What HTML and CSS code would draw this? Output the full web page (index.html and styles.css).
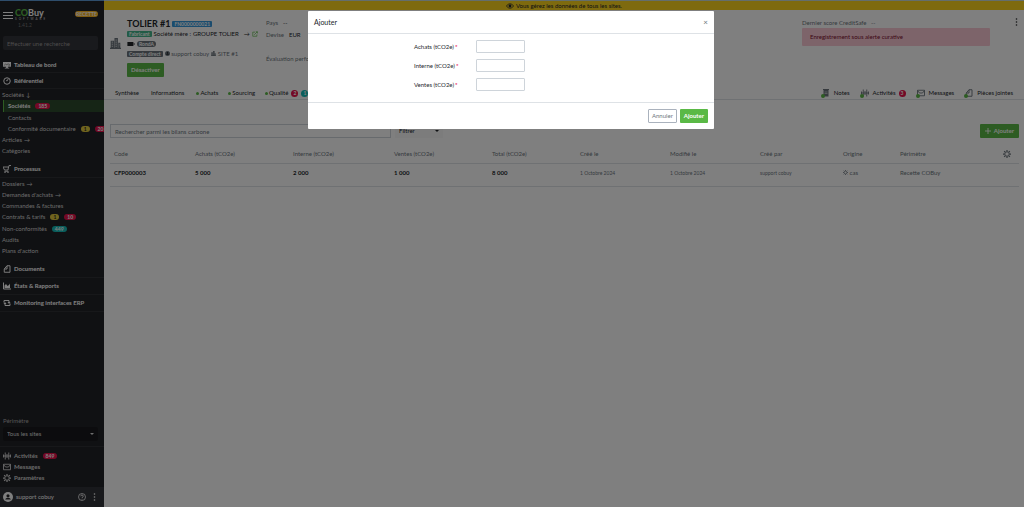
FILE: index.html
```html
<!DOCTYPE html>
<html lang="fr">
  <head>
    <meta charset="utf-8">
    <title>COBuy - TOLIER #1</title>
    <link rel="stylesheet" href="styles.css">
  </head>

  <body>
    <!-- Shared icons -->
    <svg class="sprite" aria-hidden="true">
      <symbol id="i-mail" viewBox="0 0 16 16"><path d="M1 2.5h14v11H1z M1 3l4 5h6l4-5" fill="none" stroke="currentColor" stroke-width="1.8"/></symbol>
      <symbol id="i-activity" viewBox="0 0 16 16"><path d="M1 5v6M4.500 1v14M8 4v8M11.500 1v14M15 5v6M0 8h16" fill="none" stroke="currentColor" stroke-width="1.800"/></symbol>
      <symbol id="i-gear" viewBox="0 0 16 16"><circle cx="8" cy="8" r="4.500" fill="none" stroke="currentColor" stroke-width="2"/><path d="M8 0v3M8 13v3M0 8h3M13 8h3M2.300 2.300l2 2M11.700 11.700l2 2M13.700 2.300l-2 2M4.300 11.700l-2 2" stroke="currentColor" stroke-width="2.500"/></symbol>
      <symbol id="i-doc" viewBox="0 0 16 16"><path d="M8 1.500h6v13H2.500V8L8 1.500V8H3" fill="none" stroke="currentColor" stroke-width="1.900"/></symbol>
      <symbol id="i-note" viewBox="0 0 16 16"><path d="M3 2h10v13H3z" fill="currentColor"/><path d="M5 6h6M5 9h6" stroke="#fff" stroke-width="1"/><path d="M2 1h12" stroke="currentColor" stroke-width="2"/></symbol>
      <symbol id="i-building" viewBox="0 0 16 16"><path d="M1 4h5v11H1zM6.500 0h5v15h-5zM12 7h3v8h-3zM0 14h16v2H0z" fill="currentColor"/><path d="M2.500 6h2M2.500 9h2M2.500 12h2M8 3h2M8 6h2M8 9h2M8 12h2M13 10h1" stroke="#fff" stroke-width="1"/></symbol>
      <symbol id="i-user" viewBox="0 0 16 16"><circle cx="8" cy="8" r="8" fill="currentColor"/><circle cx="8" cy="6" r="2.500" class="cut"/><path d="M3.500 12c1-4 8-4 9 0z" class="cut"/></symbol>
      <symbol id="i-dots" viewBox="0 0 4 16"><circle cx="2" cy="2" r="1.600" fill="currentColor"/><circle cx="2" cy="8" r="1.600" fill="currentColor"/><circle cx="2" cy="14" r="1.600" fill="currentColor"/></symbol>
    </svg>

    <div class="app">
      <aside class="sidebar">
        <div class="brand">
          <button class="burger" aria-label="Menu"><span></span><span></span><span></span></button>
          <a class="logo" href="#">
            <span class="logo-name"><b>CO</b>Buy</span>
            <span class="logo-sub">SOFTWARE</span>
            <span class="version">1.41.2</span>
          </a>
          <span class="env">RECETTE</span>
        </div>

        <input class="side-search" type="text" placeholder="Effectuer une recherche" aria-label="Effectuer une recherche">

        <nav class="nav">
          <a class="nav-head compact" href="#">
            <svg viewBox="0 0 18 16"><path d="M0 1h18v11H0zM7 12h4v2h3v2H4v-2h3z" fill="currentColor"/><path d="M2 9l4-3 3 2 3-4M12 7h4M12 10h4" fill="none" stroke="#333" stroke-width="1"/></svg>
            Tableau de bord
          </a>
          <a class="nav-head compact" href="#">
            <svg viewBox="0 0 16 16"><circle cx="8" cy="8" r="6.500" fill="none" stroke="currentColor" stroke-width="2"/><path d="M8 9l4-6-6 4z" fill="currentColor"/></svg>
            Référentiel
          </a>
          <ul>
            <li><a href="#">Sociétés <span class="arrow">↓</span></a></li>
            <li class="sub active"><a href="#">Sociétés <span class="badge red">185</span></a></li>
            <li class="sub"><a href="#">Contacts</a></li>
            <li class="sub"><a href="#">Conformité documentaire <span class="badge yellow">1</span><span class="badge red">20</span></a></li>
            <li><a href="#">Articles <span class="arrow">→</span></a></li>
            <li><a href="#">Catégories</a></li>
          </ul>
          <a class="nav-head spaced" href="#">
            <svg viewBox="0 0 16 16"><path d="M0 4h11l-1 6H3zM11 5l1-4h4M3 12.500h8" fill="none" stroke="currentColor" stroke-width="1.800"/><circle cx="4" cy="14.500" r="1.500" fill="currentColor"/><circle cx="10" cy="14.500" r="1.500" fill="currentColor"/></svg>
            Processus
          </a>
          <ul>
            <li><a href="#">Dossiers <span class="arrow">→</span></a></li>
            <li><a href="#">Demandes d'achats <span class="arrow">→</span></a></li>
            <li><a href="#">Commandes &amp; factures</a></li>
            <li class="tall"><a href="#">Contrats &amp; tarifs <span class="badge yellow">1</span><span class="badge red">10</span></a></li>
            <li><a href="#">Non-conformités <span class="badge teal">449</span></a></li>
            <li><a href="#">Audits</a></li>
            <li><a href="#">Plans d'action</a></li>
          </ul>
          <a class="nav-head spaced" href="#"><svg><use href="#i-doc"/></svg>Documents</a>
          <a class="nav-head" href="#">
            <svg viewBox="0 0 16 16"><path d="M1 1v13h15" fill="none" stroke="currentColor" stroke-width="2"/><path d="M3 12V7l3-3 3 4 3-2 2-3v9z" fill="currentColor"/></svg>
            États &amp; Rapports
          </a>
          <a class="nav-head" href="#">
            <svg viewBox="0 0 16 16"><path d="M2 7V3h10v4M14 9v4H4V9" fill="none" stroke="currentColor" stroke-width="2"/><path d="M9 6h6l-3 4zM1 10h6L4 6z" fill="currentColor"/></svg>
            Monitoring interfaces ERP
          </a>
        </nav>

        <div class="perimeter">
          <label for="site">Périmètre</label>
          <div class="select-wrap">
            <select id="site"><option>Tous les sites</option></select>
          </div>
        </div>

        <ul class="shortcuts">
          <li><a href="#"><svg><use href="#i-activity"/></svg>Activités <span class="badge red">849</span></a></li>
          <li><a href="#"><svg><use href="#i-mail"/></svg>Messages</a></li>
          <li><a href="#"><svg><use href="#i-gear"/></svg>Paramètres</a></li>
        </ul>

        <div class="account">
          <svg class="avatar"><use href="#i-user"/></svg>
          <span>support cobuy</span>
          <svg class="help" viewBox="0 0 16 16"><circle cx="8" cy="8" r="7" fill="none" stroke="currentColor" stroke-width="1.500"/><path d="M5.500 6.500c0-3.500 5-3.500 5 0 0 1.500-2.500 1.500-2.500 3.500M8 11.500v1.500" fill="none" stroke="currentColor" stroke-width="1.700"/></svg>
          <svg class="dots"><use href="#i-dots"/></svg>
        </div>
      </aside>

      <main class="main">
        <div class="notice">
          <svg viewBox="0 0 18 12"><path d="M1 6c4-6.500 12-6.500 16 0-4 6.500-12 6.500-16 0z" fill="none" stroke="currentColor" stroke-width="1.600"/><circle cx="9" cy="6" r="3.300" fill="currentColor"/></svg>
          Vous gérez les données de tous les sites.
        </div>

        <header class="company">
          <svg class="company-icon"><use href="#i-building"/></svg>
          <div class="identity">
            <div class="line title-line">
              <h1>TOLIER #1</h1>
              <span class="tag blue">FN0000000021</span>
            </div>
            <div class="line">
              <span class="tag green">Fabricant</span>
              <span>Société mère :</span>
              <span>GROUPE TOLIER</span>
              <span class="arrow">→</span>
              <svg class="external" viewBox="0 0 16 16"><path d="M8 3H2v11h11V9M6 10l8-8M10 2h4.500v4.500" fill="none" stroke="currentColor" stroke-width="1.800"/></svg>
            </div>
            <div class="line">
              <svg class="battery" viewBox="0 0 18 10"><path d="M0 0h15v10H0zM16 3h2v4h-2z" fill="currentColor"/></svg>
              <span class="tag gray round">RondA</span>
            </div>
            <div class="line muted">
              <span class="tag gray">Compte direct</span>
              <span><svg class="mini"><use href="#i-user"/></svg> support cobuy</span>
              <span><svg class="mini"><use href="#i-building"/></svg> SITE #1</span>
            </div>
            <button class="btn btn-green">Désactiver</button>
          </div>
          <dl class="facts">
            <div><dt>Pays</dt><dd>--</dd></div>
            <div><dt>Devise</dt><dd>EUR</dd></div>
            <div class="apart"><dt>Évaluation performance</dt><dd>--</dd></div>
          </dl>
          <div class="score">
            <p>Dernier score CreditSafe &nbsp; --</p>
            <div class="alert">Enregistrement sous alerte curative</div>
          </div>
          <button class="more" aria-label="Plus d'actions"><svg class="dots"><use href="#i-dots"/></svg></button>
        </header>

        <nav class="tabs">
          <a href="#">Synthèse</a>
          <a href="#">Informations</a>
          <a class="ok" href="#">Achats</a>
          <a class="ok" href="#">Sourcing</a>
          <a class="ok" href="#">Qualité <span class="count red">2</span><span class="count teal">1</span></a>
          <span class="tools">
            <a href="#"><svg><use href="#i-note"/></svg>Notes</a>
            <a href="#"><svg><use href="#i-activity"/></svg>Activités <span class="count red">3</span></a>
            <a href="#"><svg><use href="#i-mail"/></svg>Messages</a>
            <a href="#"><svg><use href="#i-doc"/></svg>Pièces jointes</a>
          </span>
        </nav>

        <section class="content">
          <div class="toolbar">
            <input type="text" placeholder="Rechercher parmi les bilans carbone" aria-label="Rechercher parmi les bilans carbone">
            <button class="filter">Filtrer <i class="caret"></i></button>
            <button class="btn btn-green add">
              <svg viewBox="0 0 10 10"><path d="M5 0v10M0 5h10" stroke="currentColor" stroke-width="1.500"/></svg>
              Ajouter
            </button>
          </div>

          <table>
            <colgroup>
              <col class="c-code"><col class="c-num"><col class="c-int"><col class="c-num"><col class="c-total">
              <col class="c-date"><col class="c-date"><col class="c-by"><col class="c-origin"><col>
            </colgroup>
            <thead>
              <tr>
                <th>Code</th>
                <th>Achats (tCO2e)</th>
                <th>Interne (tCO2e)</th>
                <th>Ventes (tCO2e)</th>
                <th>Total (tCO2e)</th>
                <th>Créé le</th>
                <th>Modifié le</th>
                <th>Créé par</th>
                <th>Origine</th>
                <th><div class="last-head">Périmètre <svg><use href="#i-gear"/></svg></div></th>
              </tr>
            </thead>
            <tbody>
              <tr>
                <td class="strong">CFP000003</td>
                <td class="strong">5 000</td>
                <td class="strong">2 000</td>
                <td class="strong">1 000</td>
                <td class="strong">8 000</td>
                <td class="small">1 Octobre 2024</td>
                <td class="small">1 Octobre 2024</td>
                <td class="small">support cobuy</td>
                <td><svg class="mini"><use href="#i-gear"/></svg> cas</td>
                <td>Recette COBuy</td>
              </tr>
            </tbody>
          </table>
        </section>
      </main>
    </div>

    <div class="backdrop">
      <form class="modal" role="dialog" aria-labelledby="modalTitle">
        <div class="modal-header">
          <h2 id="modalTitle">Ajouter</h2>
          <button type="button" class="close" aria-label="Fermer">×</button>
        </div>
        <div class="modal-body">
          <label for="achats">Achats (tCO2e)<em>*</em></label>
          <input type="text" id="achats" name="achats">
          <label for="interne">Interne (tCO2e)<em>*</em></label>
          <input type="text" id="interne" name="interne">
          <label for="ventes">Ventes (tCO2e)<em>*</em></label>
          <input type="text" id="ventes" name="ventes">
        </div>
        <div class="modal-footer">
          <button type="button" class="btn btn-outline">Annuler</button>
          <button type="submit" class="btn btn-green">Ajouter</button>
        </div>
      </form>
    </div>
  </body>
</html>
```

FILE: styles.css
```css
* {
  box-sizing: border-box;
}

body {
  margin: 0;
  font-family: Lato, sans-serif;
  font-size: 6px;
  line-height: 10px;
  color: #212529;
  background: #fff;
}

a {
  color: inherit;
  text-decoration: none;
}

ul,
dl,
dd,
p,
h1,
h2 {
  margin: 0;
  padding: 0;
  list-style: none;
}

button,
input,
select {
  font: inherit;
  color: inherit;
  margin: 0;
}

button {
  padding: 0;
  border: 0;
  background: none;
  cursor: pointer;
}

svg {
  width: 8px;
  height: 8px;
  flex: none;
}

.sprite {
  position: absolute;
  width: 0;
  height: 0;
}

.cut {
  fill: #26272b;
}

.app {
  display: flex;
  min-height: 100vh;
}

/* Sidebar */
.sidebar {
  display: flex;
  flex-direction: column;
  flex: none;
  width: 104px;
  border-top: 1px solid #5c9bd6;
  color: #d6d6d6;
  background: #212226;
}

.brand {
  display: flex;
  height: 35px;
  padding: 8px 6px 0 3px;
}

.burger {
  display: flex;
  flex-direction: column;
  gap: 1px;
  width: 10px;
  height: 8px;
  margin-top: 3px;
}

.burger span {
  height: 1px;
  margin-bottom: 1px;
  background: #fff;
}

.logo {
  display: flex;
  flex-direction: column;
  margin-left: 2px;
}

.logo-name {
  font-size: 9px;
  line-height: 8px;
  font-weight: bold;
  color: #fff;
}

.logo-name b {
  color: #5ab946;
}

.logo-sub {
  font-size: 3px;
  line-height: 4px;
  letter-spacing: 2px;
}

.version {
  padding-left: 3px;
  font-size: 5px;
  line-height: 8px;
  color: #777;
}

.env {
  height: 6px;
  margin: 2px 0 0 auto;
  padding: 0 1px;
  border-radius: 3px;
  font-size: 5px;
  line-height: 6px;
  font-weight: bold;
  color: #fff;
  background: #ffb822;
}

.side-search {
  height: 14px;
  margin: 0 6px 0 3px;
  padding: 0 4px;
  border: 0;
  border-radius: 2px;
  background: #33343a;
}

.side-search::placeholder {
  color: #999;
}

.nav {
  margin-top: 7px;
}

.nav-head {
  display: flex;
  align-items: center;
  gap: 3px;
  height: 17px;
  padding-left: 3px;
  border-bottom: 1px solid #2f3035;
  font-weight: bold;
  color: #fff;
}

.nav-head.compact {
  height: 16px;
}

.nav-head.spaced {
  margin-top: 5px;
}

.nav li {
  padding-left: 2px;
  line-height: 11px;
}

.nav li a,
.shortcuts a {
  display: flex;
  align-items: center;
  white-space: nowrap;
}

.nav li.tall,
.nav li.active {
  line-height: 12px;
}

.nav li.sub {
  overflow: hidden;
  margin-left: 3px;
  padding-left: 5px;
}

.nav li.active {
  padding-left: 4px;
  border-left: 1px solid #5ab946;
  font-weight: bold;
  color: #fff;
  background: #2c4b2d;
}

.arrow {
  margin-left: 2px;
}

.badge {
  padding: 0 3px;
  margin-left: 5px;
  border-radius: 3px;
  font-size: 5px;
  line-height: 6px;
  font-weight: bold;
  color: #fff;
}

.red {
  background: #e8114b;
}

.yellow {
  color: #222;
  background: #e0c83c;
}

.teal {
  background: #14bcb8;
}

.perimeter {
  margin-top: auto;
  padding: 0 6px 5px 3px;
  border-bottom: 1px solid #2f3035;
  color: #aaa;
}

.perimeter label {
  display: block;
  line-height: 12px;
}

.select-wrap {
  display: flex;
  align-items: center;
  padding-right: 4px;
  border-radius: 2px;
  color: #ddd;
  background: #18191c;
}

.select-wrap::after,
.caret {
  content: "";
  border: 2px solid transparent;
  border-top-color: currentColor;
  border-bottom: 0;
}

select {
  flex: 1;
  height: 14px;
  padding: 0 4px;
  border: 0;
  appearance: none;
  background: none;
}

.shortcuts {
  padding: 3px 3px 4px;
  font-weight: bold;
}

.shortcuts li {
  line-height: 11px;
}

.shortcuts svg {
  margin-right: 3px;
}

.account {
  display: flex;
  align-items: center;
  height: 20px;
  padding: 0 8px 0 3px;
  color: #fff;
  background: #313238;
}

.avatar {
  width: 10px;
  height: 10px;
  margin-right: 3px;
}

.help {
  margin-left: auto;
  margin-right: 7px;
}

.dots {
  width: 3px;
  height: 8px;
}

/* Main area */
.main {
  flex: 1;
  min-width: 0;
  border-top: 1px solid #c8dcd8;
}

.notice {
  display: flex;
  align-items: center;
  justify-content: center;
  gap: 2px;
  height: 9px;
  line-height: 9px;
  background: #fdd41c;
}

.company {
  display: flex;
  height: 77px;
  padding: 8px 5px 0 6px;
}

.company-icon {
  width: 11px;
  height: 11px;
  margin: 20px 6px 0 0;
  color: #6c757d;
}

.identity {
  width: 139px;
}

.line {
  display: flex;
  align-items: center;
  gap: 2px;
  height: 10px;
  white-space: nowrap;
}

.title-line {
  height: 11px;
}

h1 {
  font-size: 9px;
  font-weight: bold;
}

.tag {
  padding: 0 2px;
  border-radius: 1px;
  font-size: 5px;
  line-height: 6px;
  font-weight: bold;
  color: #fff;
}

.blue {
  background: #3598dc;
}

.green {
  background: #45b78c;
}

.gray {
  background: #6c757d;
}

.round {
  border-radius: 3px;
}

.line .arrow {
  margin-left: 3px;
}

.external {
  width: 6px;
  height: 6px;
  color: #5ab946;
}

.battery {
  width: 8px;
  height: 4px;
}

.mini {
  width: 5px;
  height: 5px;
}

.mini .cut {
  fill: #fff;
}

.muted {
  color: #6c757d;
}

.btn {
  height: 14px;
  padding: 0 3px;
  border: 1px solid transparent;
  border-radius: 1px;
  line-height: 12px;
}

.btn-green {
  font-weight: bold;
  color: #fff;
  background: #5ab946;
}

.btn-outline {
  border-color: #aab2bd;
  color: #6c757d;
  background: #fff;
}

.identity .btn {
  margin-top: 4px;
}

.facts div {
  display: flex;
  gap: 5px;
  height: 12px;
  white-space: nowrap;
}

.facts .apart {
  margin-top: 12px;
}

.facts dt,
.score p {
  color: #6c757d;
}

.score {
  width: 188px;
  margin-left: auto;
}

.alert {
  height: 18px;
  padding: 0 8px;
  border-radius: 1px;
  line-height: 18px;
  color: #7a0a2a;
  background: #fbc8d4;
}

.more {
  align-self: flex-start;
  width: 5px;
  margin-left: 24px;
}

.tabs {
  display: flex;
  height: 13px;
  padding: 0 11px;
  border-bottom: 1px solid #dee2e6;
}

.tabs a {
  display: flex;
  align-items: center;
  margin-right: 12px;
  white-space: nowrap;
}

.tabs .ok {
  margin-right: 10px;
}

.ok::before {
  content: "";
  width: 3px;
  height: 3px;
  margin-right: 1px;
  border-radius: 50%;
  background: #5ab946;
}

.count {
  width: 7px;
  height: 7px;
  margin-left: 3px;
  border-radius: 50%;
  font-size: 5px;
  line-height: 7px;
  font-weight: bold;
  text-align: center;
  color: #fff;
}

.tools {
  display: flex;
  margin-left: auto;
}

.tools a {
  position: relative;
  margin-right: 11px;
}

.tools a:last-child {
  margin-right: 0;
}

.tools svg {
  margin-right: 4px;
  color: #6c757d;
}

.tools a::before {
  content: "";
  position: absolute;
  left: -1px;
  bottom: 1px;
  width: 4px;
  height: 4px;
  border-radius: 50%;
  background: #5ab946;
}

.content {
  padding: 24px 5px 0 6px;
}

.toolbar {
  display: flex;
  gap: 4px;
}

.toolbar input {
  width: 281px;
  height: 14px;
  padding: 0 4px;
  border: 1px solid #ced4da;
}

.toolbar input::placeholder {
  color: #6c757d;
}

.filter {
  display: flex;
  align-items: center;
  justify-content: space-between;
  width: 48px;
  padding: 0 4px;
  background: #f8f8f8;
}

.add {
  display: flex;
  align-items: center;
  gap: 3px;
  margin-left: auto;
  padding: 0 4px;
}

.add svg {
  width: 6px;
  height: 6px;
}

table {
  width: 100%;
  margin-top: 8px;
  border-collapse: collapse;
  table-layout: fixed;
}

.c-code {
  width: 81px;
}

.c-num {
  width: 98px;
}

.c-int {
  width: 101px;
}

.c-total {
  width: 88px;
}

.c-date {
  width: 90px;
}

.c-by {
  width: 83px;
}

.c-origin {
  width: 57px;
}

th,
td {
  padding: 0 4px;
  border-bottom: 1px solid #dee2e6;
  text-align: left;
  font-weight: normal;
  color: #6c757d;
}

th {
  height: 17px;
}

td {
  height: 23px;
  padding-bottom: 3px;
}

.last-head {
  display: flex;
  align-items: center;
  justify-content: space-between;
  padding-right: 4px;
}

td.strong {
  font-weight: bold;
  color: #212529;
}

td.small {
  font-size: 5px;
}

/* Modal */
.backdrop {
  position: fixed;
  inset: 0;
  padding: 11px 10px 11px 8px;
  background: rgba(0, 0, 0, 0.5);
}

.modal {
  max-width: 406px;
  margin: 0 auto;
  border-radius: 1px;
  background: #fff;
}

.modal-header {
  display: flex;
  align-items: center;
  justify-content: space-between;
  height: 23px;
  padding: 0 6px;
  border-bottom: 1px solid #dee2e6;
}

h2 {
  font-size: 7px;
  font-weight: normal;
}

.close {
  font-size: 8px;
  color: #6c757d;
}

.modal-body {
  display: grid;
  grid-template-columns: 56px 49px;
  gap: 6px;
  padding: 6px 106px 11px;
}

.modal-body label {
  line-height: 13px;
  white-space: nowrap;
}

.modal-body em {
  margin-left: 1px;
  font-style: normal;
  font-weight: bold;
  color: #e8114b;
}

.modal-body input {
  width: 49px;
  height: 13px;
  padding: 0 3px;
  border: 1px solid #ced4da;
  border-radius: 1px;
}

.modal-footer {
  display: flex;
  justify-content: flex-end;
  gap: 3px;
  padding: 6px;
  border-top: 1px solid #dee2e6;
}
```
